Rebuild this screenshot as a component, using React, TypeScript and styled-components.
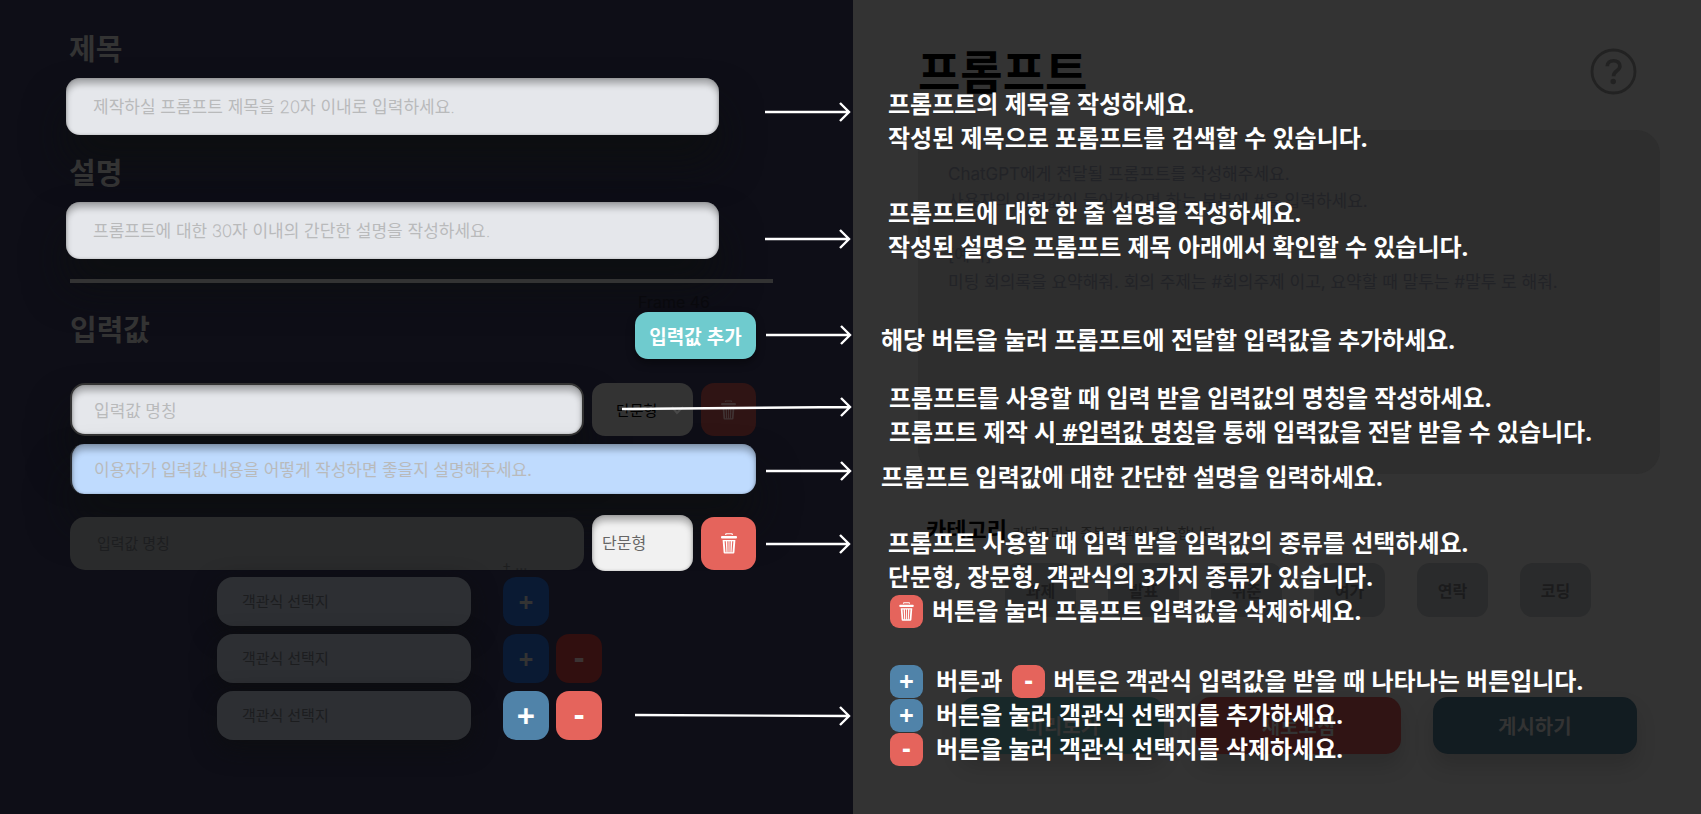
import React from "react";
import styled, { createGlobalStyle, css } from "styled-components";

const kr = `"Noto Sans", "Noto Sans CJK KR", sans-serif`;
const thinLatin = `"Noto Sans Thin", "Inter Thin", "Lato Hairline", "Noto Sans CJK KR", sans-serif`;

const GlobalStyle = createGlobalStyle`
  *, *::before, *::after { box-sizing: border-box; }
  body { margin: 0; background: #333333; font-family: ${kr}; }
  button, input, select, textarea { font: inherit; color: inherit; margin: 0; border: 0; outline: 0; }
  h1, h2, p { margin: 0; }
`;

const Page = styled.div`
  display: grid;
  grid-template-columns: 853fr 848fr;
  min-height: 100vh;
  overflow: hidden;
`;

/* ---------- left: form ---------- */

const FormPanel = styled.main`
  position: relative;
  padding: 31px 80px 40px 66px;
  background: #0e0e17;
`;

const Heading = styled.label`
  display: block;
  padding-left: 3px;
  font-size: 29px;
  font-weight: 700;
  line-height: 36px;
  color: #333333;
`;

const FieldBlock = styled.div`
  display: flex;
  flex-direction: column;
  gap: 11px;
  margin: 0 54px 20px 0;
`;

const litField = css`
  box-shadow: inset 0 6px 6px rgba(0, 0, 0, 0.28), inset 0 0 3px rgba(0, 0, 0, 0.25),
    0 28px 40px rgba(13, 15, 14, 0.7);
  &::placeholder {
    color: #b9babb;
    opacity: 1;
  }
`;

const TextField = styled.input`
  width: 100%;
  height: 57px;
  padding: 0 27px;
  border-radius: 14px;
  background: #e5e7eb;
  font-family: ${thinLatin};
  font-size: 17px;
  ${litField}
`;

const Divider = styled.hr`
  position: relative;
  height: 4px;
  margin: 0 0 29px 4px;
  border: 0;
  background: #333333;
`;

const Inputs = styled.section`
  padding: 0 17px 0 4px;
`;

const InputsHeader = styled.div`
  position: relative;
  display: flex;
  justify-content: space-between;
  align-items: flex-start;
  margin-bottom: 24px;
  & > ${Heading} { padding-left: 0; }
`;

const FrameTag = styled.span`
  position: absolute;
  right: 46px;
  bottom: 47px;
  font-family: "Inter", sans-serif;
  font-size: 16px;
  line-height: 20px;
  color: #09090d;
`;

const AddButton = styled.button`
  width: 121px;
  height: 47px;
  padding: 0;
  border-radius: 13px;
  background: #6fcbce;
  box-shadow: 0 4px 8px rgba(0, 0, 0, 0.4);
  font-size: 19px;
  font-weight: 700;
  color: #ffffff;
`;

const Row = styled.div<{ $gap?: number }>`
  display: flex;
  align-items: center;
  gap: 8px;
  margin-bottom: ${(p) => p.$gap ?? 8}px;
`;

const NameField = styled.input<{ $dim?: boolean }>`
  flex: 1;
  min-width: 0;
  height: 53px;
  border-radius: 15px;
  ${(p) =>
    p.$dim
      ? css`
          padding: 0 27px;
          background: #2a2b2c;
          font-size: 15px;
          &::placeholder { color: #1d1e20; opacity: 1; }
        `
      : css`
          padding: 2px 22px 0;
          border: 2px solid #333333;
          background: #e5e7eb;
          font-size: 17px;
          ${litField}
        `}
`;

const HintField = styled.input`
  flex: 1;
  height: 50px;
  padding: 0 22px;
  border-left: 2px solid #26292e;
  border-radius: 14px;
  background: #bfdbfe;
  font-size: 17px;
  ${litField}
`;

const SelectWrap = styled.div`
  position: relative;
  display: flex;
  width: 101px;
`;

const TypeSelect = styled.select<{ $dim?: boolean }>`
  appearance: none;
  width: 100%;
  height: ${(p) => (p.$dim ? 53 : 56)}px;
  padding: 0 ${(p) => (p.$dim ? 24 : 10)}px;
  border-radius: 13px;
  background: ${(p) => (p.$dim ? "#333333" : "#f1f1f1")};
  box-shadow: ${(p) =>
    p.$dim ? "none" : "inset 0 6px 6px rgba(0,0,0,.28), inset 0 0 3px rgba(0,0,0,.25)"};
  font-size: ${(p) => (p.$dim ? 15 : 16)}px;
  color: ${(p) => (p.$dim ? "#000000" : "#666666")};
`;

const Caret = styled.svg`
  position: absolute;
  right: 8px;
  top: 22px;
  pointer-events: none;
`;

const tones = {
  red: ["#e5645c", "#ffffff"],
  blue: ["#5083a9", "#ffffff"],
  redDim: ["#2f1414", "#3f3232"],
  blueDim: ["#0a1a33", "#333333"],
  maroonDim: ["#310f0f", "#3b3333"],
} as const;
type Tone = keyof typeof tones;

const IconButton = styled.button<{ $tone: Tone; $w: number; $h: number }>`
  display: flex;
  align-items: center;
  justify-content: center;
  flex: none;
  width: ${(p) => p.$w}px;
  height: ${(p) => p.$h}px;
  padding: 0;
  border-radius: 13px;
  background: ${(p) => tones[p.$tone][0]};
  color: ${(p) => tones[p.$tone][1]};
`;

const Choices = styled.div`
  display: flex;
  flex-direction: column;
  gap: 8px;
  margin-left: 147px;
`;

const ChoiceRow = styled.div`
  display: flex;
  gap: 7px;
`;

const ChoiceField = styled.input`
  width: 254px;
  height: 49px;
  margin-right: 25px;
  padding: 0 25px 2px;
  border-radius: 16px;
  background: #2d2f33;
  box-shadow: 0 8px 24px rgba(13, 14, 14, 0.7);
  font-size: 15px;
  &::placeholder { color: #1c1d1f; opacity: 1; }
`;

const Sign = styled.span<{ $size: number; $lift?: number }>`
  padding-bottom: ${(p) => p.$lift ?? 0}px;
  font-family: "Noto Sans", sans-serif;
  font-size: ${(p) => p.$size}px;
  font-weight: 700;
  line-height: 32px;
`;

const MoreTag = styled.span`
  position: absolute;
  left: 502px;
  top: 557px;
  font-family: "Inter", sans-serif;
  font-size: 14px;
  line-height: 16px;
  color: #1d1e1f;
`;

const ArrowBox = styled.svg<{ $top: number; $right: number }>`
  position: absolute;
  top: ${(p) => p.$top}px;
  right: ${(p) => p.$right}px;
  pointer-events: none;
`;

/* ---------- right: prompt preview ---------- */

const PromptPanel = styled.aside`
  position: relative;
  padding: 42px 41px 60px 65px;
  background: #333333;
`;

const TitleBar = styled.header`
  display: flex;
  justify-content: space-between;
  align-items: center;
  height: 58px;
  margin: 0 23px 30px 0;
`;

const Title = styled.h1`
  font-size: 46px;
  font-weight: 700;
  line-height: 58px;
  color: #000000;
`;

const HelpButton = styled.button`
  display: flex;
  padding: 0;
  background: none;
  color: #222222;
`;

const PromptText = styled.textarea`
  display: block;
  width: 100%;
  height: 344px;
  padding: 31px 30px;
  border-radius: 24px;
  background: #2e2e2e;
  resize: none;
  font-family: "Inter", ${kr};
  font-size: 17px;
  line-height: 27px;
  color: #222327;
`;

const CategoryHead = styled.div`
  display: flex;
  align-items: center;
  gap: 5px;
  margin: 40px 0 19px 8px;
  line-height: 30px;
`;

const CategoryTitle = styled.h2`
  font-size: 22px;
  font-weight: 700;
  color: #000000;
`;

const CategoryHint = styled.p`
  padding-top: 8px;
  font-size: 14px;
  line-height: 22px;
  color: #1c1c1c;
`;

const Chips = styled.div`
  display: flex;
  gap: 32px;
  margin: 0 0 80px 87px;
`;

const Chip = styled.button`
  flex: none;
  width: 71px;
  height: 54px;
  padding: 0;
  border-radius: 13px;
  background: #2a2b2c;
  font-size: 16px;
  font-weight: 700;
  color: #1b1b1c;
`;

const Actions = styled.div`
  display: flex;
  gap: 32px;
  margin: 0 23px 0 42px;
`;

const Action = styled.button<{ $bg: string }>`
  flex: 1;
  height: 57px;
  padding: 0;
  border-radius: 15px;
  background: ${(p) => p.$bg};
  box-shadow: 0 12px 20px rgba(0, 0, 0, 0.14);
  font-size: 20px;
  font-weight: 700;
  color: #333333;
`;

/* ---------- guide notes floating over the preview ---------- */

const Note = styled.div<{ $x: number; $y: number }>`
  position: absolute;
  left: ${(p) => p.$x}px;
  top: ${(p) => p.$y}px;
  font-size: 24px;
  font-weight: 700;
  line-height: 34px;
  white-space: pre;
  color: #ffffff;
`;

const NoteLine = styled.p<{ $gap?: number }>`
  display: flex;
  align-items: center;
  gap: ${(p) => p.$gap ?? 0}px;
  height: 34px;
`;

const Badge = styled.span<{ $tone: Tone }>`
  display: inline-flex;
  align-items: center;
  justify-content: center;
  flex: none;
  width: 33px;
  height: 33px;
  margin-left: 2px;
  border-radius: 9px;
  background: ${(p) => tones[p.$tone][0]};
`;

function Trash({ width, height }: { width: number; height: number }) {
  return (
    <svg width={width} height={height} viewBox="0 0 16 21" fill="currentColor" aria-hidden="true">
      <path d="M4 1.9 4.6.3h6.8l.6 1.6h-1.2l-.3-.6h-5l-.3.6z" />
      <rect x="0" y="3" width="16" height="2.4" rx="1" />
      <path
        fillRule="evenodd"
        d="M1.6 7h12.8l-1 12.6q-.1 1-1.1 1H3.700q-1 0-1.100-1zM3.600 8.300l.9 10.900h.9L4.800 8.300zM6.300 8.300l.3 10.900h.9V8.300zM8.500 8.300v10.900h.9l.3-10.900zM11.200 8.300l-.6 10.900h.9l.9-10.900z"
      />
    </svg>
  );
}

function Arrow({ top, right, length, rise = 0 }: { top: number; right: number; length: number; rise?: number }) {
  const y = 11;
  return (
    <ArrowBox $top={top} $right={right} width={length} height={22} viewBox={`0 0 ${length} 22`} aria-hidden="true">
      <path
        d={`M0 ${y + rise}L${length - 2} ${y}M${length - 11} 2L${length - 2} ${y}L${length - 11} 20`}
        fill="none"
        stroke="#ffffff"
        strokeWidth="2.4"
      />
    </ArrowBox>
  );
}

const arrows = [
  { top: 101, right: 2, length: 86 },
  { top: 228, right: 2, length: 86 },
  { top: 324, right: 1, length: 86 },
  { top: 396, right: 1, length: 230, rise: 2 },
  { top: 460, right: 1, length: 86 },
  { top: 533, right: 2, length: 85 },
  { top: 705, right: 2, length: 216, rise: -1 },
];

const promptSample = `ChatGPT에게 전달될 프롬프트를 작성해주세요.
사용자의 입력값이 들어갔으면 하는 부분에 #을 입력하세요.

[예시]
미팅 회의록을 요약해줘. 회의 주제는 #회의주제 이고, 요약할 때 말투는 #말투 로 해줘.`;

export default function App() {
  return (
    <>
      <GlobalStyle />
      <Page>
        <FormPanel>
          <FieldBlock>
            <Heading htmlFor="title">제목</Heading>
            <TextField id="title" placeholder="제작하실 프롬프트 제목을 20자 이내로 입력하세요." />
          </FieldBlock>
          <FieldBlock>
            <Heading htmlFor="desc">설명</Heading>
            <TextField id="desc" placeholder="프롬프트에 대한 30자 이내의 간단한 설명을 작성하세요." />
          </FieldBlock>
          <Divider />
          <Inputs>
            <InputsHeader>
              <Heading htmlFor="name-1">입력값</Heading>
              <FrameTag>Frame 46</FrameTag>
              <AddButton type="button">입력값 추가</AddButton>
            </InputsHeader>
            <Row>
              <NameField id="name-1" placeholder="입력값 명칭" />
              <SelectWrap>
                <TypeSelect $dim aria-label="입력값 종류">
                  <option>단문형</option>
                  <option>장문형</option>
                  <option>객관식</option>
                </TypeSelect>
                <Caret width="14" height="10" viewBox="0 0 14 10" fill="none" strokeWidth="2">
                  <path d="M1 2l5 6 6-6" stroke="#4a4a4a" />
                </Caret>
              </SelectWrap>
              <IconButton type="button" $tone="redDim" $w={55} $h={53} aria-label="삭제">
                <Trash width={15} height={20} />
              </IconButton>
            </Row>
            <Row $gap={21}>
              <HintField
                aria-label="입력값 설명"
                placeholder="이용자가 입력값 내용을 어떻게 작성하면 좋을지 설명해주세요."
              />
            </Row>
            <Row $gap={6}>
              <NameField $dim aria-label="입력값 명칭" placeholder="입력값 명칭" />
              <SelectWrap>
                <TypeSelect aria-label="입력값 종류">
                  <option>단문형</option>
                  <option>장문형</option>
                  <option>객관식</option>
                </TypeSelect>
              </SelectWrap>
              <IconButton type="button" $tone="red" $w={55} $h={53} aria-label="삭제">
                <Trash width={16} height={21} />
              </IconButton>
            </Row>
            <Choices>
              {[0, 1, 2].map((i) => (
                <ChoiceRow key={i}>
                  <ChoiceField aria-label="객관식 선택지" placeholder="객관식 선택지" />
                  <IconButton type="button" $tone={i === 2 ? "blue" : "blueDim"} $w={46} $h={49}>
                    <Sign $size={i === 2 ? 32 : 26}>+</Sign>
                  </IconButton>
                  {i > 0 && (
                    <IconButton type="button" $tone={i === 2 ? "red" : "maroonDim"} $w={46} $h={49}>
                      <Sign $size={32} $lift={4}>-</Sign>
                    </IconButton>
                  )}
                </ChoiceRow>
              ))}
            </Choices>
          </Inputs>
          <MoreTag>+ ...</MoreTag>
          {arrows.map((a) => (
            <Arrow key={a.top} {...a} />
          ))}
        </FormPanel>

        <PromptPanel>
          <TitleBar>
            <Title>프롬프트</Title>
            <HelpButton type="button" aria-label="도움말">
              <svg width="47" height="47" viewBox="0 0 47 47" fill="none" stroke="currentColor" aria-hidden="true">
                <circle cx="23.5" cy="23.5" r="21.5" strokeWidth="2.800" />
                <path d="M17.200 18.300C17.200 14.500 20 12.700 23.500 12.700C27.300 12.700 29.900 14.900 29.900 18.200C29.900 23 23.500 22.600 23.500 28.200" strokeWidth="3.600" />
                <circle cx="23.200" cy="33.500" r="2.700" fill="currentColor" stroke="none" />
              </svg>
            </HelpButton>
          </TitleBar>
          <PromptText aria-label="프롬프트" defaultValue={promptSample} spellCheck={false} />
          <CategoryHead>
            <CategoryTitle>카테고리</CategoryTitle>
            <CategoryHint>카테고리는 중복 선택이 가능합니다</CategoryHint>
          </CategoryHead>
          <Chips>
            {["과제", "발표", "취준", "여가", "연락", "코딩"].map((c) => (
              <Chip key={c} type="button">{c}</Chip>
            ))}
          </Chips>
          <Actions>
            <Action type="button" $bg="#182829">미리보기</Action>
            <Action type="button" $bg="#301414">새로고침</Action>
            <Action type="button" $bg="#121c21">게시하기</Action>
          </Actions>

          <Note $x={35} $y={87}>
            <NoteLine>프롬프트의 제목을 작성하세요.</NoteLine>
            <NoteLine>작성된 제목으로 포롬프트를 검색할 수 있습니다.</NoteLine>
          </Note>
          <Note $x={35} $y={196}>
            <NoteLine>프롬프트에 대한 한 줄 설명을 작성하세요.</NoteLine>
            <NoteLine>작성된 설명은 프롬프트 제목 아래에서 확인할 수 있습니다.</NoteLine>
          </Note>
          <Note $x={28} $y={323}>
            <NoteLine>해당 버튼을 눌러 프롬프트에 전달할 입력값을 추가하세요.</NoteLine>
          </Note>
          <Note $x={36} $y={381}>
            <NoteLine>프롬프트를 사용할 때 입력 받을 입력값의 명칭을 작성하세요.</NoteLine>
            <NoteLine>프롬프트 제작 시<u> #입력값 명칭</u>을 통해 입력값을 전달 받을 수 있습니다.</NoteLine>
          </Note>
          <Note $x={28} $y={460}>
            <NoteLine>프롬프트 입력값에 대한 간단한 설명을 입력하세요.</NoteLine>
          </Note>
          <Note $x={35} $y={526}>
            <NoteLine>프롬프트 사용할 때 입력 받을 입력값의 종류를 선택하세요.</NoteLine>
            <NoteLine>단문형, 장문형, 객관식의 3가지 종류가 있습니다.</NoteLine>
            <NoteLine $gap={9}>
              <Badge $tone="red"><Trash width={15} height={19} /></Badge>
              버튼을 눌러 프롬프트 입력값을 삭제하세요.
            </NoteLine>
          </Note>
          <Note $x={35} $y={664}>
            <NoteLine $gap={13}>
              <Badge $tone="blue"><Sign $size={26}>+</Sign></Badge>
              <NoteLine as="span" $gap={8}>
                <span>버튼과</span>
                <Badge $tone="red"><Sign $size={26} $lift={3}>-</Sign></Badge>
                <span>버튼은 객관식 입력값을 받을 때 나타나는 버튼입니다.</span>
              </NoteLine>
            </NoteLine>
            <NoteLine $gap={13}>
              <Badge $tone="blue"><Sign $size={26}>+</Sign></Badge>
              버튼을 눌러 객관식 선택지를 추가하세요.
            </NoteLine>
            <NoteLine $gap={13}>
              <Badge $tone="red"><Sign $size={26} $lift={3}>-</Sign></Badge>
              버튼을 눌러 객관식 선택지를 삭제하세요.
            </NoteLine>
          </Note>
        </PromptPanel>
      </Page>
    </>
  );
}
